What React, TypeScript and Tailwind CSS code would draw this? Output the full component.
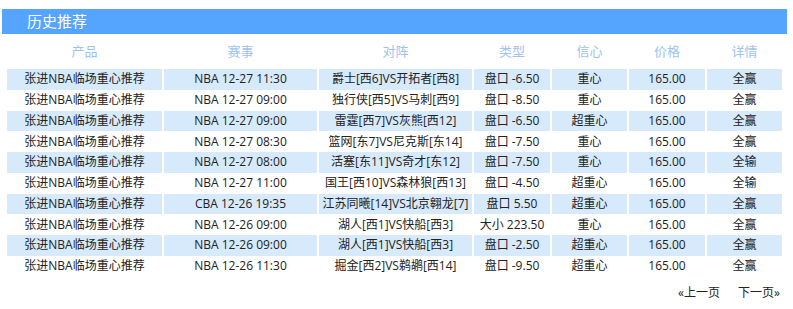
import React from "react";

const rows: string[][] = [
  ["张进NBA临场重心推荐", "NBA 12-27 11:30", "爵士[西6]VS开拓者[西8]", "盘口 -6.50", "重心", "165.00", "全赢"],
  ["张进NBA临场重心推荐", "NBA 12-27 09:00", "独行侠[西5]VS马刺[西9]", "盘口 -8.50", "重心", "165.00", "全赢"],
  ["张进NBA临场重心推荐", "NBA 12-27 09:00", "雷霆[西7]VS灰熊[西12]", "盘口 -6.50", "超重心", "165.00", "全赢"],
  ["张进NBA临场重心推荐", "NBA 12-27 08:30", "篮网[东7]VS尼克斯[东14]", "盘口 -7.50", "重心", "165.00", "全赢"],
  ["张进NBA临场重心推荐", "NBA 12-27 08:00", "活塞[东11]VS奇才[东12]", "盘口 -7.50", "重心", "165.00", "全输"],
  ["张进NBA临场重心推荐", "NBA 12-27 11:00", "国王[西10]VS森林狼[西13]", "盘口 -4.50", "超重心", "165.00", "全输"],
  ["张进NBA临场重心推荐", "CBA 12-26 19:35", "江苏同曦[14]VS北京翱龙[7]", "盘口 5.50", "超重心", "165.00", "全赢"],
  ["张进NBA临场重心推荐", "NBA 12-26 09:00", "湖人[西1]VS快船[西3]", "大小 223.50", "重心", "165.00", "全赢"],
  ["张进NBA临场重心推荐", "NBA 12-26 09:00", "湖人[西1]VS快船[西3]", "盘口 -2.50", "超重心", "165.00", "全赢"],
  ["张进NBA临场重心推荐", "NBA 12-26 11:30", "掘金[西2]VS鹈鹕[西14]", "盘口 -9.50", "超重心", "165.00", "全赢"],
];

const heads = ["产品", "赛事", "对阵", "类型", "信心", "价格", "详情"];

const cols = "grid grid-cols-[155px_153px_153px_76px_75px_76px_75px] gap-x-[2px]";

export default function App() {
  return (
    <div
      className="w-[793px] h-[309px] bg-white text-[#222] overflow-hidden"
      style={{ fontFamily: '"Open Sans", "Noto Sans CJK SC", sans-serif' }}
    >
      <div className="pt-[9px] pl-[2px] pr-[6px]">
        <div className="h-[25px] bg-[#55a5ff] flex items-center pl-[25px] text-white text-[15px] leading-none">
          历史推荐
        </div>
      </div>
      <div className="pl-[7px]">
        <div className={`${cols} h-[35px] items-center text-[13px] text-[#9ec3f3] leading-none`}>
          {heads.map((h) => (
            <div key={h} className="text-center">
              {h}
            </div>
          ))}
        </div>
        {rows.map((r, i) => (
          <div key={i} className={`${cols} h-[20.75px] text-[12px] leading-none`}>
            {r.map((c, j) => (
              <div
                key={j}
                className={`flex items-center justify-center whitespace-nowrap ${i % 2 === 0 ? "bg-[#d6eafc]" : ""}`}
              >
                {c}
              </div>
            ))}
          </div>
        ))}
        <div className="flex justify-end gap-[18px] pr-[13px] pt-[10px] text-[12px] leading-none">
          <span>«上一页</span>
          <span>下一页»</span>
        </div>
      </div>
    </div>
  );
}
